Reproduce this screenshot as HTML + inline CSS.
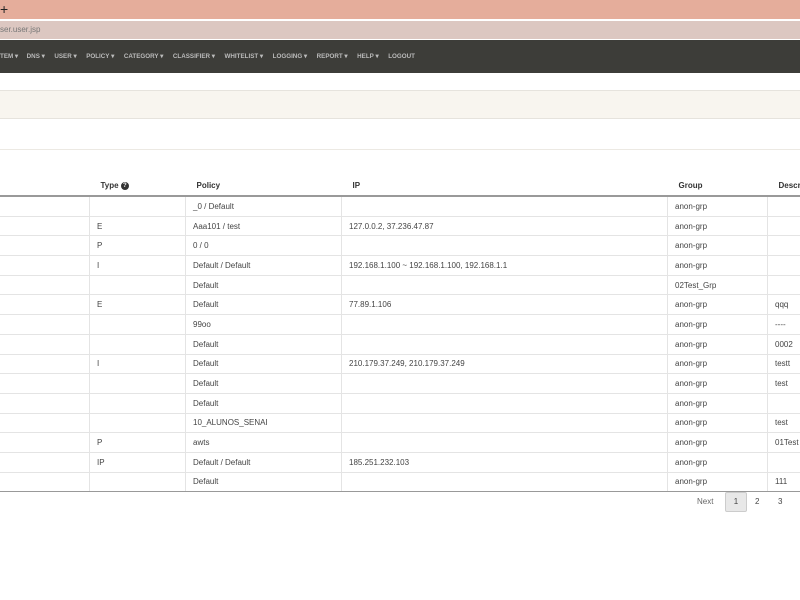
<!DOCTYPE html>
<html><head><style>
body{margin:0;width:800px;height:600px;overflow:hidden;background:#fff;font-family:"Liberation Sans",sans-serif;position:relative}
.a{position:absolute}
table{position:absolute;left:-1px;top:176px;border-collapse:collapse;font-size:8px;color:#444;width:840px;table-layout:fixed}
th{font-weight:bold;text-align:left;height:19px;padding:0 0 0 11px;border-bottom:2px solid #999;color:#333}
td{height:18.7px;padding:0 0 0 7px;border-top:1px solid #e4e4e4;border-left:1px solid #e4e4e4;white-space:nowrap;overflow:hidden}
tr:last-child td{border-bottom:1px solid #999}
.nav span{margin-right:9.6px}
</style></head><body>
<div class="a" style="left:0;top:0;width:800px;height:19px;background:#e5ad9b;font-size:14px;color:#222;line-height:19px">+</div>
<div class="a" style="left:0;top:21px;width:800px;height:18px;background:#dcc7c1;font-size:8px;color:#777;line-height:18px">ser.user.jsp</div>
<div class="a nav" style="left:0;top:40px;width:800px;height:33px;background:#3d3d39;color:#bbb;font-size:6.25px;font-weight:bold;line-height:33px;white-space:nowrap">
<span>TEM ▾</span><span style="margin-left:-1px">DNS ▾</span><span>USER ▾</span><span>POLICY ▾</span><span>CATEGORY ▾</span><span>CLASSIFIER ▾</span><span>WHITELIST ▾</span><span>LOGGING ▾</span><span>REPORT ▾</span><span>HELP ▾</span><span>LOGOUT</span></div>
<div class="a" style="left:0;top:90px;width:800px;height:27px;background:#f8f5ef;border-top:1px solid #e6e3dd;border-bottom:1px solid #e6e3dd"></div>
<div class="a" style="left:0;top:149px;width:800px;height:1px;background:#ece9e3"></div>
<table>
<colgroup><col style="width:90px"><col style="width:96px"><col style="width:156px"><col style="width:326px"><col style="width:100px"><col style="width:72px"></colgroup>
<tr><th></th><th>Type <span style="display:inline-block;width:8px;height:8px;border-radius:50%;background:#333;color:#fff;font-size:6px;text-align:center;line-height:8px;vertical-align:middle">?</span></th><th>Policy</th><th>IP</th><th>Group</th><th>Descr</th></tr>
<tr><td></td><td></td><td>_0 / Default</td><td></td><td>anon-grp</td><td></td></tr>
<tr><td></td><td>E</td><td>Aaa101 / test</td><td>127.0.0.2, 37.236.47.87</td><td>anon-grp</td><td></td></tr>
<tr><td></td><td>P</td><td>0 / 0</td><td></td><td>anon-grp</td><td></td></tr>
<tr><td></td><td>I</td><td>Default / Default</td><td>192.168.1.100 ~ 192.168.1.100, 192.168.1.1</td><td>anon-grp</td><td></td></tr>
<tr><td></td><td></td><td>Default</td><td></td><td>02Test_Grp</td><td></td></tr>
<tr><td></td><td>E</td><td>Default</td><td>77.89.1.106</td><td>anon-grp</td><td>qqq</td></tr>
<tr><td></td><td></td><td>99oo</td><td></td><td>anon-grp</td><td>----</td></tr>
<tr><td></td><td></td><td>Default</td><td></td><td>anon-grp</td><td>0002</td></tr>
<tr><td></td><td>I</td><td>Default</td><td>210.179.37.249, 210.179.37.249</td><td>anon-grp</td><td>testt</td></tr>
<tr><td></td><td></td><td>Default</td><td></td><td>anon-grp</td><td>test</td></tr>
<tr><td></td><td></td><td>Default</td><td></td><td>anon-grp</td><td></td></tr>
<tr><td></td><td></td><td>10_ALUNOS_SENAI</td><td></td><td>anon-grp</td><td>test</td></tr>
<tr><td></td><td>P</td><td>awts</td><td></td><td>anon-grp</td><td>01Test</td></tr>
<tr><td></td><td>IP</td><td>Default / Default</td><td>185.251.232.103</td><td>anon-grp</td><td></td></tr>
<tr><td></td><td></td><td>Default</td><td></td><td>anon-grp</td><td>111</td></tr>
</table>
<div class="a" style="left:697px;top:497px;font-size:8px;color:#666">Next</div>
<div class="a" style="left:725px;top:492px;width:20px;height:18px;background:#e8e8e8;border:1px solid #ccc;border-radius:2px;font-size:8px;color:#444;text-align:center;line-height:18px">1</div>
<div class="a" style="left:755px;top:497px;font-size:8px;color:#444">2</div>
<div class="a" style="left:778px;top:497px;font-size:8px;color:#444">3</div>
</body></html>
